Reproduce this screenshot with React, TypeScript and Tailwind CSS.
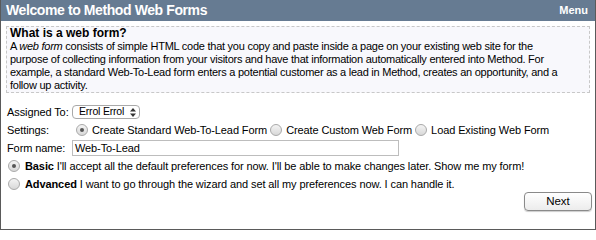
import React from 'react';

const Radio: React.FC<{ checked?: boolean }> = ({ checked }) => (
  <span className="inline-flex h-[12px] w-[12px] shrink-0 items-center justify-center rounded-full border border-[#a9a9a9] bg-gradient-to-b from-[#f4f4f4] to-[#d8d8d8]">
    {checked && <span className="h-[4px] w-[4px] rounded-full bg-[#555]" />}
  </span>
);

const App: React.FC = () => {
  return (
    <div className="h-[230px] w-[596px] bg-white font-['Liberation_Sans',Arial,sans-serif] text-[11px] text-black">
      <div className="flex h-full flex-col border border-t-0 border-[#5a5a5a]">
        <div className="flex h-[21px] shrink-0 items-center justify-between bg-[#667b92] pl-[5px] pr-[7px] text-white">
          <span className="text-[14px] font-bold tracking-[-0.4px]">Welcome to Method Web Forms</span>
          <span className="text-[11px] font-bold">Menu</span>
        </div>

        <div className="mx-[5px] mt-[5px] border border-dashed border-[#c8c8c8] bg-[#f8f8fc] px-[3px] leading-[13px]">
          <div className="text-[12px] font-bold leading-[13px]">What is a web form?</div>
          <p className="whitespace-nowrap tracking-[-0.25px]">
            A <i>web form</i> consists of simple HTML code that you copy and paste inside a page on your existing web site for the
            <br />
            purpose of collecting information from your visitors and have that information automatically entered into Method. For
            <br />
            example, a standard Web-To-Lead form enters a potential customer as a lead in Method, creates an opportunity, and a
            <br />
            follow up activity.
          </p>
        </div>

        <div className="mt-[10px] flex flex-col whitespace-nowrap px-[6px] tracking-[-0.1px]">
          <div className="flex h-[18px] items-center">
            <span className="w-[65px]">Assigned To:</span>
            <span className="flex h-[14px] w-[68px] items-center justify-between rounded-[4px] border border-[#a9a9a9] bg-white pl-[6px] pr-[3px] text-[10.5px] tracking-[-0.2px]">
              Errol Errol
              <svg width="6" height="9" viewBox="0 0 6 9">
                <path d="M0 3.5 L3 0 L6 3.5 Z M0 5.5 L3 9 L6 5.5 Z" fill="#333" />
              </svg>
            </span>
          </div>
          <div className="flex h-[18px] items-center">
            <span className="w-[69px]">Settings:</span>
            <label className="flex items-center gap-[4px]">
              <Radio checked />
              Create Standard Web-To-Lead Form
            </label>
            <label className="ml-[3px] flex items-center gap-[4px]">
              <Radio />
              Create Custom Web Form
            </label>
            <label className="ml-[3px] flex items-center gap-[4px]">
              <Radio />
              Load Existing Web Form
            </label>
          </div>
          <div className="flex h-[18px] items-center">
            <span className="w-[65px]">Form name:</span>
            <span className="flex h-[16px] w-[327px] items-center border border-[#bdbdbd] px-[2px]">Web-To-Lead</span>
          </div>
          <label className="flex h-[18px] items-center gap-[5px] pl-[1px]">
            <Radio checked />
            <span>
              <b>Basic</b> I'll accept all the default preferences for now. I'll be able to make changes later. Show me my form!
            </span>
          </label>
          <label className="flex h-[18px] items-center gap-[5px] pl-[1px]">
            <Radio />
            <span>
              <b>Advanced</b> I want to go through the wizard and set all my preferences now. I can handle it.
            </span>
          </label>
        </div>

        <div className="flex justify-end px-[3px]">
          <button className="-mt-[1px] h-[19px] w-[68px] rounded-[4px] border border-[#8a8a8a] bg-gradient-to-b from-white to-[#ececec] text-[11.5px] shadow-[0_1px_1px_rgba(0,0,0,0.2)]">
            Next
          </button>
        </div>
      </div>
    </div>
  );
};

export default App;
